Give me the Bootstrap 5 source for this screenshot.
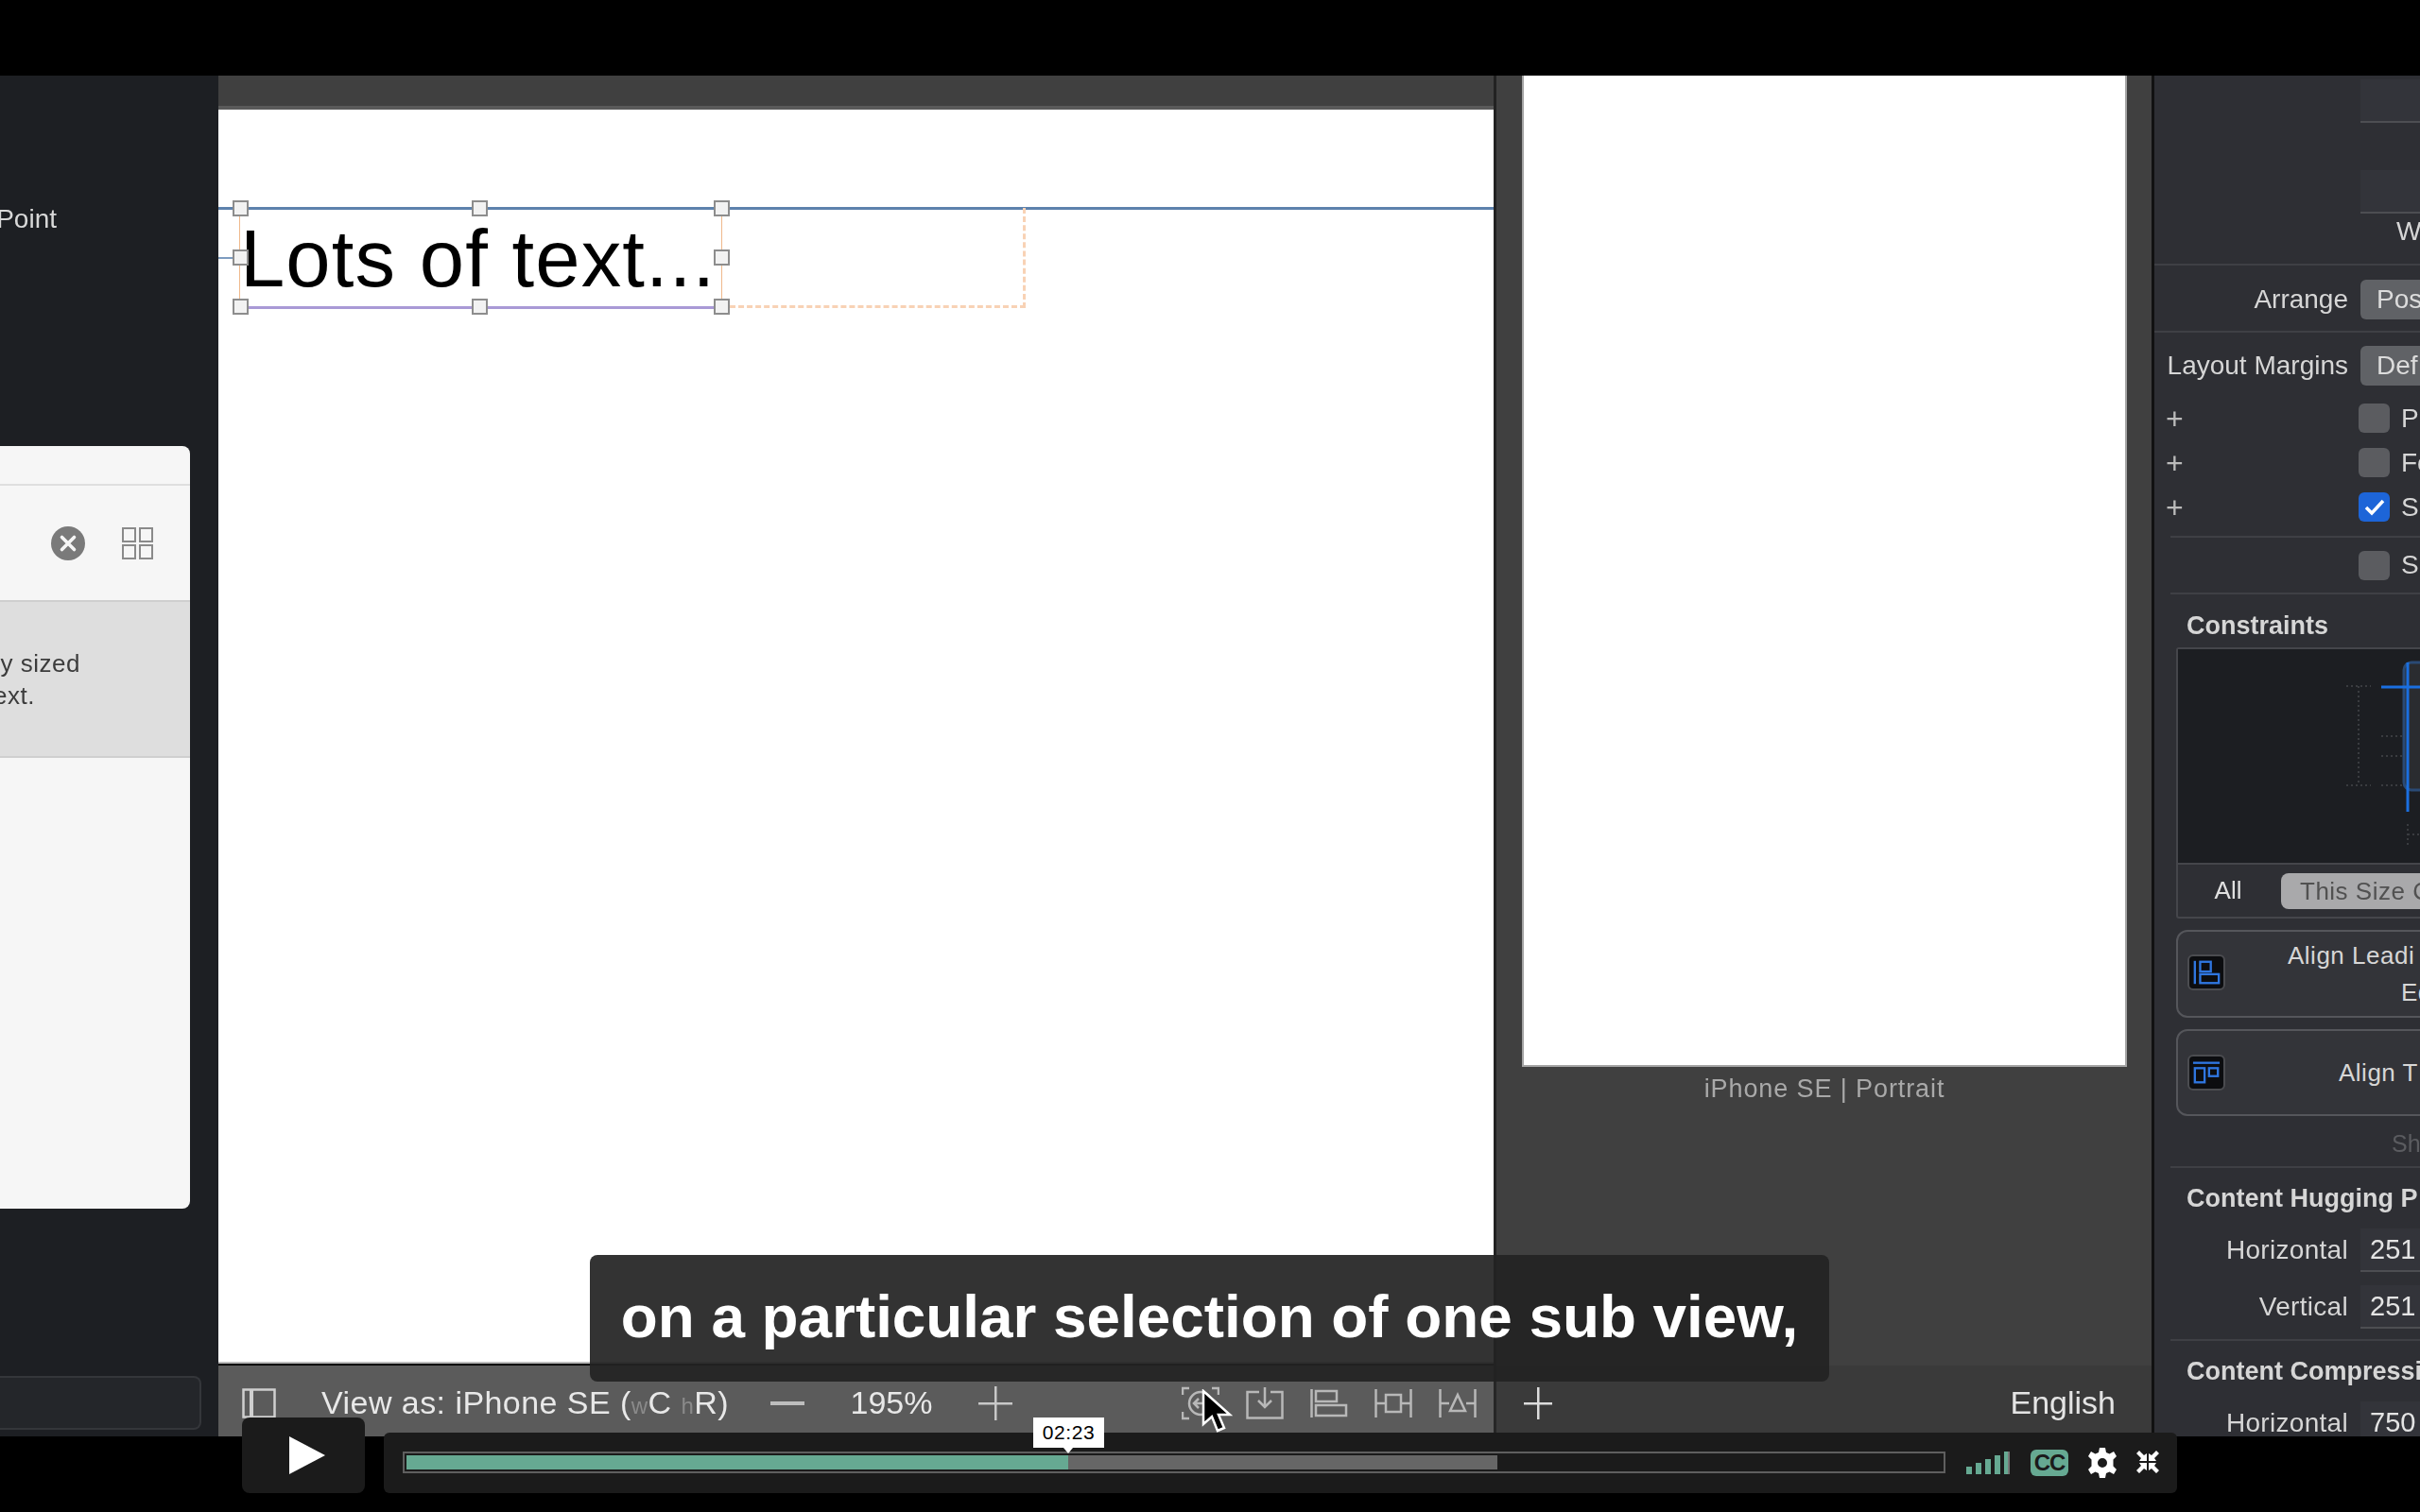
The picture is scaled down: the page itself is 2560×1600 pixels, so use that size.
<!DOCTYPE html>
<html lang="en">
<head>
<meta charset="UTF-8" />
<title>Xcode video</title>
<link rel="stylesheet" href="https://cdn.jsdelivr.net/npm/bootstrap@5.3.0/dist/css/bootstrap.min.css" />
<style>
  html, body { height: 1600px; overflow: hidden; background: #000; font-family: "Liberation Sans", Arial, sans-serif; }
  .stage { position: relative; width: 2560px; height: 1600px; padding: 80px 0; }
  .frame { height: 1440px; filter: blur(.5px); }

  /* left library panel */
  .lib-pane { width: 231px; background: #1d1f23; flex: none; }
  .point-lbl { width: 60px; height: 60px; margin-top: 122px; font-size: 28px; color: #d8d8d8; white-space: nowrap; }
  .lib-card { width: 201px; height: 807px; margin-top: 210px; background: #f6f6f6; border-radius: 0 8px 8px 0; }
  .lib-strip { height: 42px; border-bottom: 2px solid #dfdfdf; }
  .lib-search { height: 121px; padding-right: 39px; gap: 39px; }
  .lib-hit { height: 167px; background: #dedede; border-top: 2px solid #cfcfcf; border-bottom: 2px solid #cfcfcf; padding-top: 48px; font-size: 26px; line-height: 34px; letter-spacing: .5px; color: #3c3c3c; }
  .lib-hit div { width: 85px; white-space: nowrap; }
  .lib-filter { width: 213px; height: 57px; margin-top: 177px; border: 2px solid #34363a; border-left: 0; border-radius: 0 8px 8px 0; background: #24262a; }

  /* canvas */
  .mid-col { width: 2045px; flex: none; }
  .canvas-col { width: 1349px; flex: none; }
  .canvas-top { height: 36px; background: #404040; border-bottom: 4px solid #5a5a5a; }
  .canvas-white { position: relative; height: 1327px; background: #fff; border-bottom: 2px solid #bbb; padding: 104px 0 0 22px; }
  .guide-line { position: absolute; left: 0; right: 0; top: 103px; height: 3px; background: #5d82ad; }
  .guide-mid { position: absolute; left: 0; width: 23px; top: 156px; height: 2px; background: #7d9cc0; }
  .sel-box { position: relative; width: 511px; height: 107px; border-left: 1px solid #efb98c; border-right: 1px solid #efb98c; border-bottom: 3px solid #a99ad6; }
  .sel-text { font-size: 85px; line-height: 107px; color: #000; white-space: nowrap; letter-spacing: 1.1px; }
  .sel-dash { position: absolute; left: 509px; top: 0; width: 322px; height: 106px; border: 3px dashed #f8d2b5; border-left: 0; border-top: 0; }
  .grab { position: absolute; width: 17px; height: 17px; background: #f2f2f2; border: 2px solid #8d8d8d; margin: -8px 0 0 -8px; }
  .grab-mid { left: 49.7%; }

  .prev-col { width: 696px; flex: none; background: #404040; border-left: 3px solid #222; padding-left: 27px; }
  .prev-white { width: 640px; height: 1049px; background: #fff; border: 2px solid #a5a5a5; border-top: 0; }
  .prev-cap { width: 640px; margin-top: 8px; font-size: 27px; line-height: 30px; color: #a9a9a9; letter-spacing: .9px; text-align: center; }

  /* toolbar under the canvas */
  .tool-left { width: 1349px; height: 75px; flex: none; background: #5b5b5b; color: #e8e8e8; font-size: 34px; padding: 4px 0 0 25px; }
  .tool-right { width: 696px; height: 75px; flex: none; background: #3a3a3a; border-left: 3px solid #262626; color: #e4e4e4; font-size: 34px; padding: 4px 38px 0 29px; }
  .dim-ch { font-size: 24px; color: #8a8a8a; }
  .view-lbl { margin-left: 48px; width: 475px; white-space: nowrap; letter-spacing: .45px; }
  .zoom-lbl { width: 184px; text-align: center; }
  .tool-icons { margin-left: 179px; gap: 28px; }

  /* inspector */
  .insp { flex: 1; min-width: 0; background: #2e2f34; border-left: 3px solid #111; overflow: hidden; color: #d6d6d6; font-size: 28px; }
  .insp-sep { border-bottom: 2px solid #3f4045; margin-left: 17px; }
  .insp-top { height: 201px; }
  .insp-field { height: 46px; margin-left: 218px; background: #33343a; border-bottom: 2px solid #4d4e52; padding-left: 10px; line-height: 46px; }
  .field-gap { margin-top: 50px; }
  .insp-w { margin: 4px 0 0 256px; line-height: 30px; }
  .insp-lab { width: 205px; flex: none; text-align: right; white-space: nowrap; }
  .insp-btn { height: 42px; width: 120px; margin-left: 13px; flex: none; background: #606266; border-radius: 6px; padding-left: 17px; line-height: 42px; color: #dcdcdc; white-space: nowrap; }
  .row-arr { height: 71px; padding-top: 2px; }
  .row-lay { height: 67px; padding-top: 2px; }
  .row-chk { height: 47px; }
  .plus-ic { width: 204px; margin-left: -5px; flex: none; font-size: 32px; color: #bbb; }
  .chk-box { width: 33px; height: 31px; flex: none; border-radius: 6px; background: #5b5c60; }
  .chk-on { background: #1d65d8; }
  .chk-txt { margin-left: 12px; white-space: nowrap; }
  .chk-wrap { padding-bottom: 7px; }
  .row-s { height: 60px; }
  .head-lbl { padding-left: 34px; font-weight: 700; font-size: 27px; white-space: nowrap; }
  .head-con { height: 56px; padding-top: 10px; }
  .con-box { width: 300px; height: 287px; margin-left: 23px; border: 2px solid #45464b; border-radius: 3px; }
  .con-draw { height: 228px; background: #1c1e22; border-bottom: 2px solid #45464b; }
  .con-foot { height: 55px; }
  .all-lbl { width: 109px; flex: none; padding-right: 3px; text-align: center; font-size: 26px; color: #e0e0e0; }
  .size-pill { width: 200px; height: 38px; flex: none; background: #a9a9ab; border-radius: 8px 0 0 8px; padding-left: 20px; line-height: 38px; font-size: 26px; letter-spacing: .5px; color: #515151; white-space: nowrap; }
  .act-card { position: relative; width: 300px; margin: 12px 0 0 23px; border: 2px solid #55565b; border-radius: 12px; background: #333439; }
  .act-one { height: 93px; }
  .act-two { height: 92px; }
  .act-ic { position: absolute; left: 10px; width: 40px; height: 38px; background: #0c0d10; border: 2px solid #4b4c50; border-radius: 6px; padding: 3px; }
  .act-txt { font-size: 26px; letter-spacing: .5px; white-space: nowrap; line-height: 39px; }
  .act-a { padding: 6px 0 0 116px; }
  .act-b { padding-left: 120px; }
  .act-c { padding: 25px 0 0 170px; }
  .show-row { height: 55px; padding: 11px 0 0 234px; font-size: 25px; color: #5b5c60; }
  .head-hug { height: 64px; }
  .num-row { height: 46px; }
  .num-gap { margin-top: 14px; }
  .num-wrap { padding-bottom: 11px; }
  .num-wrap .insp-lab { width: 188px; }
  .num-lab { letter-spacing: .3px; }
  .num-box { width: 120px; height: 100%; margin-left: 13px; flex: none; background: #33343a; border-bottom: 2px solid #4d4e52; padding-left: 10px; line-height: 44px; color: #e4e4e4; font-size: 29px; }

  /* player overlays */
  .caption-box { position: absolute; left: 624px; top: 1328px; width: 1311px; height: 134px; padding-bottom: 3px; background: rgba(35, 35, 35, .927); border-radius: 8px; color: #fff; font-weight: 700; font-size: 63.8px; white-space: nowrap; }
  .cursor-ic { position: absolute; left: 1270px; top: 1470px; }
  .player { position: absolute; left: 256px; top: 1500px; width: 2047px; height: 80px; gap: 20px; }
  .play-btn { width: 130px; height: 80px; flex: none; background: #1b1b1b; border-radius: 8px; }
  .player-bar { flex: 1; height: 64px; background: #1b1b1b; border-radius: 6px; padding: 20px 0 0 20px; }
  .seek { position: relative; width: 1632px; height: 23px; flex: none; border: 2px solid #5f5f5f; padding: 2px; }
  .seek-played { height: 100%; background: #66a992; }
  .seek-loaded { height: 100%; background: #666; }
  .time-tip { position: absolute; left: 665px; top: -38px; width: 75px; height: 32px; background: #fff; color: #000; font-size: 21px; line-height: 32px; text-align: center; letter-spacing: .6px; }
  .time-tip::after { content: ""; position: absolute; left: 32px; top: 32px; border: 5px solid transparent; border-top: 6px solid #fff; border-bottom: 0; }
  .sig-ic { margin-left: 22px; }
  .cc-ic { width: 40px; height: 28px; margin: -2px 0 0 22px; background: #66a992; border-radius: 6px; color: #1b1b1b; font-weight: 700; font-size: 24px; line-height: 28px; text-align: center; letter-spacing: -1px; }
  .gear-ic { margin: -4px 0 0 20px; }
  .shrink-ic { margin: -1px 0 0 20px; }
</style>
</head>
<body>
<div class="stage">
  <div class="frame d-flex">
    <!-- library -->
    <div class="lib-pane d-flex flex-column">
      <div class="point-lbl d-flex justify-content-end align-items-center">Point</div>
      <div class="lib-card">
        <div class="lib-strip"></div>
        <div class="lib-search d-flex justify-content-end align-items-center">
          <svg width="36" height="36" viewBox="0 0 36 36"><circle cx="18" cy="18" r="18" fill="#7a7a7a"/><path d="M11.5 11.5l13 13M24.5 11.5l-13 13" stroke="#f6f6f6" stroke-width="3.6" stroke-linecap="round"/></svg>
          <svg width="33" height="34" viewBox="0 0 33 34" fill="none" stroke="#8a8a8a" stroke-width="2"><rect x="1" y="1" width="13" height="14"/><rect x="19" y="1" width="13" height="14"/><rect x="1" y="19" width="13" height="14"/><rect x="19" y="19" width="13" height="14"/></svg>
        </div>
        <div class="lib-hit">
          <div class="d-flex justify-content-end">y sized</div>
          <div class="d-flex justify-content-end pe-5">text.</div>
        </div>
      </div>
      <div class="lib-filter"></div>
    </div>

    <div class="mid-col d-flex flex-column">
      <div class="d-flex flex-grow-1">
        <!-- canvas with the selected label -->
        <div class="canvas-col">
          <div class="canvas-top"></div>
          <div class="canvas-white">
            <div class="guide-line"></div>
            <div class="guide-mid"></div>
            <div class="sel-box">
              <div class="sel-text">Lots of text...</div>
              <div class="sel-dash"></div>
              <span class="grab top-0 start-0"></span>
              <span class="grab top-0 grab-mid"></span>
              <span class="grab top-0 start-100"></span>
              <span class="grab top-50 start-0"></span>
              <span class="grab top-50 start-100"></span>
              <span class="grab top-100 start-0"></span>
              <span class="grab top-100 grab-mid"></span>
              <span class="grab top-100 start-100"></span>
            </div>
          </div>
        </div>
        <!-- preview -->
        <div class="prev-col">
          <div class="prev-white"></div>
          <div class="prev-cap">iPhone SE | Portrait</div>
        </div>
      </div>
      <div class="d-flex">
        <div class="tool-left d-flex align-items-center">
          <svg width="36" height="32" viewBox="0 0 36 32" fill="none" stroke="#cfcfcf" stroke-width="2.5"><rect x="1.5" y="1.5" width="33" height="29"/><path d="M10 2v28" stroke-width="4"/></svg>
          <div class="view-lbl">View as: iPhone SE (<span class="dim-ch">w</span>C <span class="dim-ch">h</span>R)</div>
          <svg width="36" height="6" viewBox="0 0 36 6"><rect y="1" width="36" height="4" fill="#bdbdbd"/></svg>
          <div class="zoom-lbl">195%</div>
          <svg width="36" height="36" viewBox="0 0 36 36" fill="#c8c8c8"><rect x="17" width="2.5" height="36"/><rect y="17" width="36" height="2.5"/></svg>
          <div class="tool-icons d-flex align-items-center">
            <svg width="40" height="36" viewBox="0 0 40 36" fill="none" stroke="#b8b8b8" stroke-width="2.5"><path d="M1 9V2h7M32 2h7v7M1 27v7h7M39 27v7h-7"/><circle cx="20" cy="18" r="12"/><path d="M24 18H13m5-5l-5 5 5 5"/></svg>
            <svg width="40" height="34" viewBox="0 0 40 34" fill="none" stroke="#b8b8b8" stroke-width="2.5"><path d="M14 5H1.5v27.5h37V5H26M20 0v21m-7-7l7 7 7-7"/></svg>
            <svg width="40" height="30" viewBox="0 0 40 30" fill="none" stroke="#b8b8b8" stroke-width="2.5"><path d="M1.5 0v30"/><rect x="6" y="2" width="22" height="11"/><rect x="6" y="17" width="32" height="11"/></svg>
            <svg width="40" height="30" viewBox="0 0 40 30" fill="none" stroke="#b8b8b8" stroke-width="2.5"><path d="M1.5 0v30M38.5 0v30M2 15h10M28 15h10"/><rect x="12" y="6" width="16" height="18"/></svg>
            <svg width="40" height="30" viewBox="0 0 40 30" fill="none" stroke="#b8b8b8" stroke-width="2.5"><path d="M1.5 0v30M38.5 0v30M2 15h9M29 15h9M20 6l8 17H12z"/></svg>
          </div>
        </div>
        <div class="tool-right d-flex align-items-center justify-content-between">
          <svg width="30" height="34" viewBox="0 0 30 34" fill="#dcdcdc"><rect x="14" width="2.5" height="34"/><rect y="16" width="30" height="2.5"/></svg>
          <div>English</div>
        </div>
      </div>
    </div>

    <!-- inspector -->
    <div class="insp">
      <div class="insp-top insp-sep pt-1 ms-0">
        <div class="insp-field"></div>
        <div class="insp-field field-gap"></div>
        <div class="insp-w">W</div>
      </div>
      <div class="row-arr insp-sep ms-0 d-flex align-items-center">
        <div class="insp-lab">Arrange</div><div class="insp-btn">Pos</div>
      </div>
      <div class="row-lay d-flex align-items-center">
        <div class="insp-lab">Layout Margins</div><div class="insp-btn">Def</div>
      </div>
      <div class="chk-wrap insp-sep">
        <div class="row-chk d-flex align-items-center"><div class="plus-ic">+</div><div class="chk-box"></div><div class="chk-txt">P</div></div>
        <div class="row-chk d-flex align-items-center"><div class="plus-ic">+</div><div class="chk-box"></div><div class="chk-txt">Fo</div></div>
        <div class="row-chk d-flex align-items-center"><div class="plus-ic">+</div>
          <div class="chk-box chk-on d-flex align-items-center justify-content-center"><svg width="22" height="18" viewBox="0 0 22 18" fill="none" stroke="#fff" stroke-width="3.5"><path d="M2 9l6 6L20 2"/></svg></div>
          <div class="chk-txt">S</div></div>
      </div>
      <div class="row-s insp-sep d-flex align-items-center">
        <div class="plus-ic"></div><div class="chk-box"></div><div class="chk-txt">S</div>
      </div>
      <div class="head-con head-lbl d-flex align-items-center">Constraints</div>
      <div class="con-box">
        <div class="con-draw">
          <svg width="296" height="226" viewBox="0 0 296 226" fill="none">
            <path d="M191 39v105M178 39h26M178 144h26M215 92h26M215 113h26M215 144h26M243 185v24M243 196h14" stroke="#3a3c40" stroke-width="2" stroke-dasharray="2 3"/>
            <rect x="239" y="14" width="60" height="135" rx="8" fill="#2a2c30" stroke="#2a4a75" stroke-width="3"/>
            <path d="M243 14v158M215 40h60" stroke="#1a6fe0" stroke-width="3"/>
          </svg>
        </div>
        <div class="con-foot d-flex align-items-center">
          <div class="all-lbl">All</div>
          <div class="size-pill">This Size C</div>
        </div>
      </div>
      <div class="act-card act-one">
        <div class="act-ic d-flex align-items-center" style="top:24px">
          <svg width="32" height="28" viewBox="0 0 32 28" fill="none" stroke="#2f76e0" stroke-width="2.5"><path d="M3 1v26"/><rect x="9" y="2" width="12" height="11"/><rect x="9" y="16" width="21" height="10"/></svg>
        </div>
        <div class="act-txt act-a">Align Leadi<br><span class="d-block act-b">Ed</span></div>
      </div>
      <div class="act-card act-two">
        <div class="act-ic d-flex align-items-center" style="top:25px">
          <svg width="32" height="28" viewBox="0 0 32 28" fill="none" stroke="#2f76e0" stroke-width="2.5"><path d="M1 3h30"/><rect x="3" y="9" width="11" height="16"/><rect x="19" y="9" width="10" height="9"/></svg>
        </div>
        <div class="act-txt act-c">Align T</div>
      </div>
      <div class="show-row insp-sep">Sh</div>
      <div class="head-hug head-lbl d-flex align-items-center">Content Hugging P</div>
      <div class="num-wrap insp-sep">
        <div class="num-row d-flex align-items-center"><div class="insp-lab num-lab">Horizontal</div><div class="num-box">251</div></div>
        <div class="num-row num-gap d-flex align-items-center"><div class="insp-lab num-lab">Vertical</div><div class="num-box">251</div></div>
      </div>
      <div class="head-hug head-lbl d-flex align-items-center">Content Compressi</div>
      <div class="num-row d-flex align-items-center"><div class="insp-lab num-lab">Horizontal</div><div class="num-box">750</div></div>
    </div>
  </div>

  <!-- overlays from the video player -->
  <div class="caption-box d-flex align-items-center justify-content-center">on a particular selection of one sub view,</div>
  <svg class="cursor-ic" width="36" height="46" viewBox="0 0 36 46"><path d="M3 2v35l9-8 6 15 7-3-6-14h12z" fill="#000" stroke="#fff" stroke-width="2.5"/></svg>
  <div class="player d-flex align-items-end">
    <div class="play-btn d-flex align-items-center justify-content-center">
      <svg class="ms-2" width="38" height="40" viewBox="0 0 38 40"><path d="M0 0l38 20L0 40z" fill="#fff"/></svg>
    </div>
    <div class="player-bar d-flex align-items-start">
      <div class="seek d-flex">
        <div class="seek-played" style="width:700px"></div>
        <div class="seek-loaded" style="width:454px"></div>
        <div class="time-tip">02:23</div>
      </div>
      <svg class="sig-ic" width="46" height="24" viewBox="0 0 46 24" fill="#66a992"><rect y="16" width="6" height="8"/><rect x="10" y="12" width="6" height="12"/><rect x="20" y="8" width="6" height="16"/><rect x="30" y="4" width="6" height="20"/><rect x="40" width="4" height="24"/><rect x="44" width="2" height="24" fill="#777"/></svg>
      <div class="cc-ic">CC</div>
      <svg class="gear-ic" width="32" height="32" viewBox="0 0 32 32"><path fill="#fff" fill-rule="evenodd" d="M13 0h6l1 5 3.5 1.5L28 4l3 5-3.5 3.5v7L31 23l-3 5-4.5-2.500L20 27l-1 5h-6l-1-5-3.500-1.500L4 28l-3-5 3.500-3.500v-7L1 9l3-5 4.500 2.500L12 5zM16 11a5 5 0 1 0 0 10 5 5 0 0 0 0-10z"/></svg>
      <svg class="shrink-ic" width="24" height="24" viewBox="0 0 24 24" fill="#fff"><path d="M0 3l3-3 5 5 3-2v8H3l2-3zM24 3l-3-3-5 5-3-2v8h8l-2-3zM0 21l3 3 5-5 3 2v-8H3l2 3zM24 21l-3 3-5-5-3 2v-8h8l-2 3z"/></svg>
    </div>
  </div>
</div>
</body>
</html>
